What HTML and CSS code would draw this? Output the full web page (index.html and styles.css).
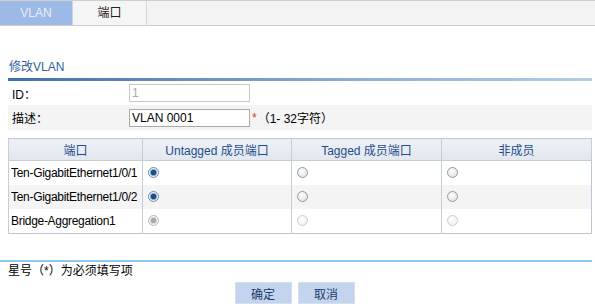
FILE: index.html
```html
<!DOCTYPE html>
<html lang="zh">
<head>
    <meta charset="UTF-8">
    <title>VLAN</title>
    <link rel="stylesheet" href="styles.css">
</head>
<body>
    <div class="tabs">
        <div class="tab active">VLAN</div>
        <div class="tab">端口</div>
    </div>

    <div class="page">
        <div class="section-title">修改VLAN</div>

        <div class="form-row">
            <span class="label">ID：</span>
            <input class="field" type="text" value="1" disabled>
        </div>
        <div class="form-row alt">
            <span class="label">描述：</span>
            <input class="field" type="text" value="VLAN 0001">
            <span class="req">*</span><span class="hint">（1- 32字符）</span>
        </div>

        <table class="ports">
            <thead>
                <tr>
                    <th class="c1">端口</th>
                    <th class="c2">Untagged 成员端口</th>
                    <th class="c3">Tagged 成员端口</th>
                    <th>非成员</th>
                </tr>
            </thead>
            <tbody>
                <tr>
                    <td class="name">Ten-GigabitEthernet1/0/1</td>
                    <td><span class="radio on"></span></td>
                    <td><span class="radio"></span></td>
                    <td><span class="radio"></span></td>
                </tr>
                <tr class="alt">
                    <td class="name">Ten-GigabitEthernet1/0/2</td>
                    <td><span class="radio on"></span></td>
                    <td><span class="radio"></span></td>
                    <td><span class="radio"></span></td>
                </tr>
                <tr>
                    <td class="name">Bridge-Aggregation1</td>
                    <td><span class="radio dis on"></span></td>
                    <td><span class="radio dis"></span></td>
                    <td><span class="radio dis"></span></td>
                </tr>
            </tbody>
        </table>
    </div>

    <div class="footer">
        <div class="note">星号（*）为必须填写项</div>
        <div class="buttons">
            <button class="btn">确定</button>
            <button class="btn">取消</button>
        </div>
    </div>
</body>
</html>
```

FILE: styles.css
```css
body {
    margin: 0;
    font-family: "Liberation Sans", "Noto Sans CJK SC", sans-serif;
    font-size: 12px;
    color: #000;
    background: #fff;
}
.tabs {
    display: flex;
    height: 24px;
    background: #f3f3f3;
    border-top: 1px solid #cfcfcf;
    border-bottom: 1px solid #cfcfcf;
}
.tab {
    width: 73px;
    line-height: 24px;
    text-align: center;
    color: #222;
    border-right: 1px solid #d6d6d6;
    background: #f5f5f5;
}
.tab.active {
    width: 72px;
    background: #9dbae6;
    color: #e8eef8;
    border-right: 1px solid #c8d6ec;
}
.page {
    padding: 0 3px 0 8px;
}
.section-title {
    margin-top: 34px;
    padding: 0 0 4px 1px;
    color: #2f5f9e;
    line-height: 14px;
    border-bottom: 3px solid #5a86bd;
    border-image: linear-gradient(90deg, #3f6fa8, #8eaed6 60%, #b6cbe6) 1;
}
.form-row {
    display: flex;
    align-items: center;
    height: 24px;
    padding-left: 4px;
}
.form-row:first-of-type {
    margin-top: 1px;
}
.form-row.alt {
    background: #f4f4f4;
    height: 25px;
}
.label {
    width: 117px;
}
.field {
    box-sizing: border-box;
    width: 121px;
    height: 18px;
    margin: 0;
    padding: 0 2px;
    border: 1px solid #a9a9a9;
    font-family: inherit;
    font-size: 12px;
    color: #000;
    background: #fff;
}
.field:disabled {
    color: #aaa;
    border-color: #c8c8c8;
}
.req {
    color: #e03030;
    margin: 0 1px 0 2px;
}
.ports {
    width: 584px;
    margin-top: 8px;
    table-layout: fixed;
    border-collapse: collapse;
    border: 1px solid #bcc6d6;
}
.ports th {
    height: 21px;
    font-weight: normal;
    color: #1f4d8a;
    background: linear-gradient(#eef1f6, #e2e7ef);
    border: 1px solid #c4cdda;
    padding: 0;
}
.ports .c1 { width: 133px; }
.ports .c2 { width: 148px; }
.ports .c3 { width: 149px; }
.ports td {
    height: 24px;
    padding: 0 0 0 5px;
    border-left: 1px solid #c4cdda;
    white-space: nowrap;
}
.ports td.name {
    padding-left: 2px;
    letter-spacing: -0.3px;
    overflow: hidden;
}
.ports tr.alt td {
    background: #f4f4f4;
}
.radio {
    display: inline-block;
    box-sizing: border-box;
    width: 11px;
    height: 11px;
    border-radius: 50%;
    border: 1px solid #9a9a9a;
    background: radial-gradient(circle at 40% 35%, #fff, #dcdcdc);
    vertical-align: middle;
    position: relative;
    top: -1px;
}
.radio.on {
    border-color: #6f8fb0;
    background: radial-gradient(circle, #1c4f7e 0 2.5px, #7aa2c8 3px, #e8f0f8 4px);
}
.radio.dis {
    border-color: #cfcfcf;
    background: radial-gradient(circle at 40% 35%, #fff, #ececec);
}
.radio.dis.on {
    border-color: #b8b8b8;
    background: radial-gradient(circle, #a8a8a8 0 2.5px, #d8d8d8 3px, #f4f4f4 4px);
}
.footer {
    margin: 26px 3px 0 0;
    border-top: 2px solid #8cc8f0;
}
.note {
    padding: 2px 0 0 8px;
    line-height: 14px;
}
.buttons {
    display: flex;
    justify-content: center;
    gap: 6px;
    margin-top: 4px;
    padding-right: 3px;
}
.btn {
    width: 57px;
    height: 22px;
    padding: 0;
    border: 1px solid #d4dff0;
    background: #c4d4ee;
    color: #1a3c6c;
    font-family: inherit;
    font-size: 12px;
}
```
